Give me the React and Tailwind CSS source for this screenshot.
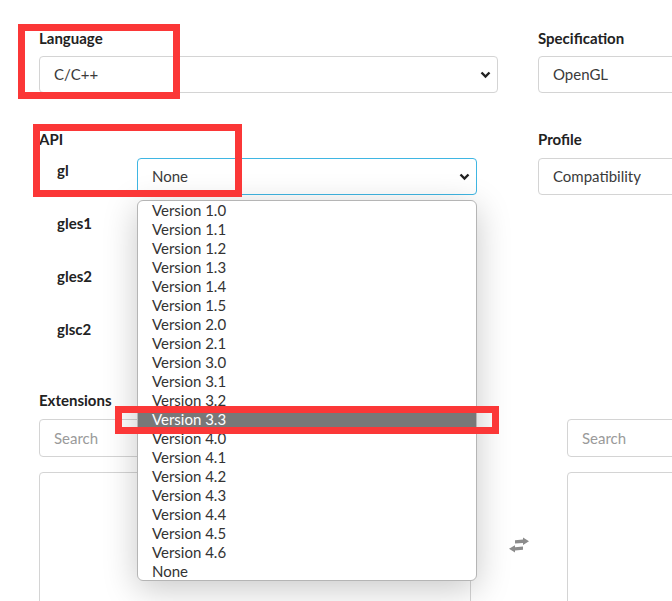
import React from 'react'

const versions = [
  'Version 1.0', 'Version 1.1', 'Version 1.2', 'Version 1.3', 'Version 1.4', 'Version 1.5',
  'Version 2.0', 'Version 2.1', 'Version 3.0', 'Version 3.1', 'Version 3.2', 'Version 3.3',
  'Version 4.0', 'Version 4.1', 'Version 4.2', 'Version 4.3', 'Version 4.4', 'Version 4.5',
  'Version 4.6', 'None',
]

const Chevron = () => (
  <svg width="11" height="8" viewBox="0 0 11 8" className="shrink-0">
    <path d="M1.5 1.5 L5.5 5.5 L9.5 1.5" fill="none" stroke="#222" strokeWidth="2.4" />
  </svg>
)

// two offset solid arrows, like the old "exchange" glyph
const SwapIcon = () => (
  <svg width="22" height="16" viewBox="0 0 22 16">
    <path d="M7 3.2 L15 2.6 L15 0.5 L21 4.2 L15 8 L15 6 L7 6.6 Z" fill="#8c8c8c" />
    <path d="M15 9.6 L7 10.2 L7 8.2 L1 11.8 L7 15.5 L7 13.4 L15 12.8 Z" fill="#8c8c8c" />
  </svg>
)

const Select = ({ value, focused, chevron = true, className = '' }) => (
  <div
    className={`h-[37px] flex items-center justify-between pl-[14px] pr-[6px] rounded-[4px] bg-white border text-[15px] text-[#3a3a3a] ${
      focused ? 'border-[#3fb6e3]' : 'border-[#d4d4d4]'
    } ${className}`}
  >
    <span>{value}</span>
    {chevron && <Chevron />}
  </div>
)

const Label = ({ children, className = '' }) => (
  <div className={`font-bold text-[15px] leading-[20px] text-[#222] ${className}`}>{children}</div>
)

const ApiRow = ({ name, value, focused }) => (
  <div className="flex mb-[16px]">
    <div className="w-[98px] pl-[18px] pt-[2px] font-bold text-[15px] leading-[20px] text-[#222]">{name}</div>
    <Select value={value} focused={focused} className="w-[340px]" />
  </div>
)

const App = () => {
  return (
    <div className="relative w-[672px] h-[601px] overflow-hidden bg-white font-['Lato','Liberation_Sans',sans-serif]">
      <div className="w-[1000px] pl-[39px] pt-[28px]">
        <div className="flex gap-[40px]">
          <div className="w-[459px]">
            <Label className="mb-[8px]">Language</Label>
            <Select value="C/C++" />
          </div>
          <div className="w-[459px]">
            <Label className="mb-[8px]">Specification</Label>
            <Select value="OpenGL" />
          </div>
        </div>

        <div className="flex gap-[40px] mt-[36px]">
          <div className="w-[459px]">
            <Label className="mb-[9px]">API</Label>
            <ApiRow name="gl" value="None" focused />
            <ApiRow name="gles1" value="" />
            <ApiRow name="gles2" value="" />
            <ApiRow name="glsc2" value="" />
          </div>
          <div className="w-[459px]">
            <Label className="mb-[9px]">Profile</Label>
            <Select value="Compatibility" />
          </div>
        </div>

        <div className="flex mt-[20px]">
          <div className="w-[432px]">
            <Label className="mb-[9px]">Extensions</Label>
            <div className="h-[38px] flex items-center pl-[14px] rounded-[4px] border border-[#d4d4d4] text-[15px] text-[#9a9a9a]">
              Search
            </div>
            <div className="mt-[15px] h-[200px] rounded-[4px] border border-[#d4d4d4]"></div>
          </div>
          <div className="w-[96px] flex justify-center pt-[147px]">
            <SwapIcon />
          </div>
          <div className="w-[432px]">
            <div className="h-[20px] mb-[9px]"></div>
            <div className="h-[38px] flex items-center pl-[14px] rounded-[4px] border border-[#d4d4d4] text-[15px] text-[#9a9a9a]">
              Search
            </div>
            <div className="mt-[15px] h-[200px] rounded-[4px] border border-[#d4d4d4]"></div>
          </div>
        </div>
      </div>

      {/* open dropdown of the gl select */}
      <div className="absolute left-[137px] top-[200px] w-[340px] h-[381px] bg-white border border-[#b5b5b5] rounded-[6px] shadow-[0_8px_34px_rgba(0,0,0,0.22)] overflow-hidden">
        {versions.map((v) => (
          <div
            key={v}
            className={`h-[19px] leading-[18px] pl-[14px] text-[15px] ${
              v === 'Version 3.3' ? 'bg-[#787878] text-white' : 'text-[#333]'
            }`}
          >
            {v}
          </div>
        ))}
      </div>

      {/* annotation boxes */}
      <div className="absolute left-[18px] top-[24px] w-[162px] h-[75px] border-[7px] border-[#fb3737]"></div>
      <div className="absolute left-[33px] top-[124px] w-[209px] h-[73px] border-[7px] border-[#fb3737]"></div>
      <div className="absolute left-[115px] top-[406px] w-[384px] h-[28px] border-[7px] border-[#fb3737]"></div>
    </div>
  )
}

export default App
